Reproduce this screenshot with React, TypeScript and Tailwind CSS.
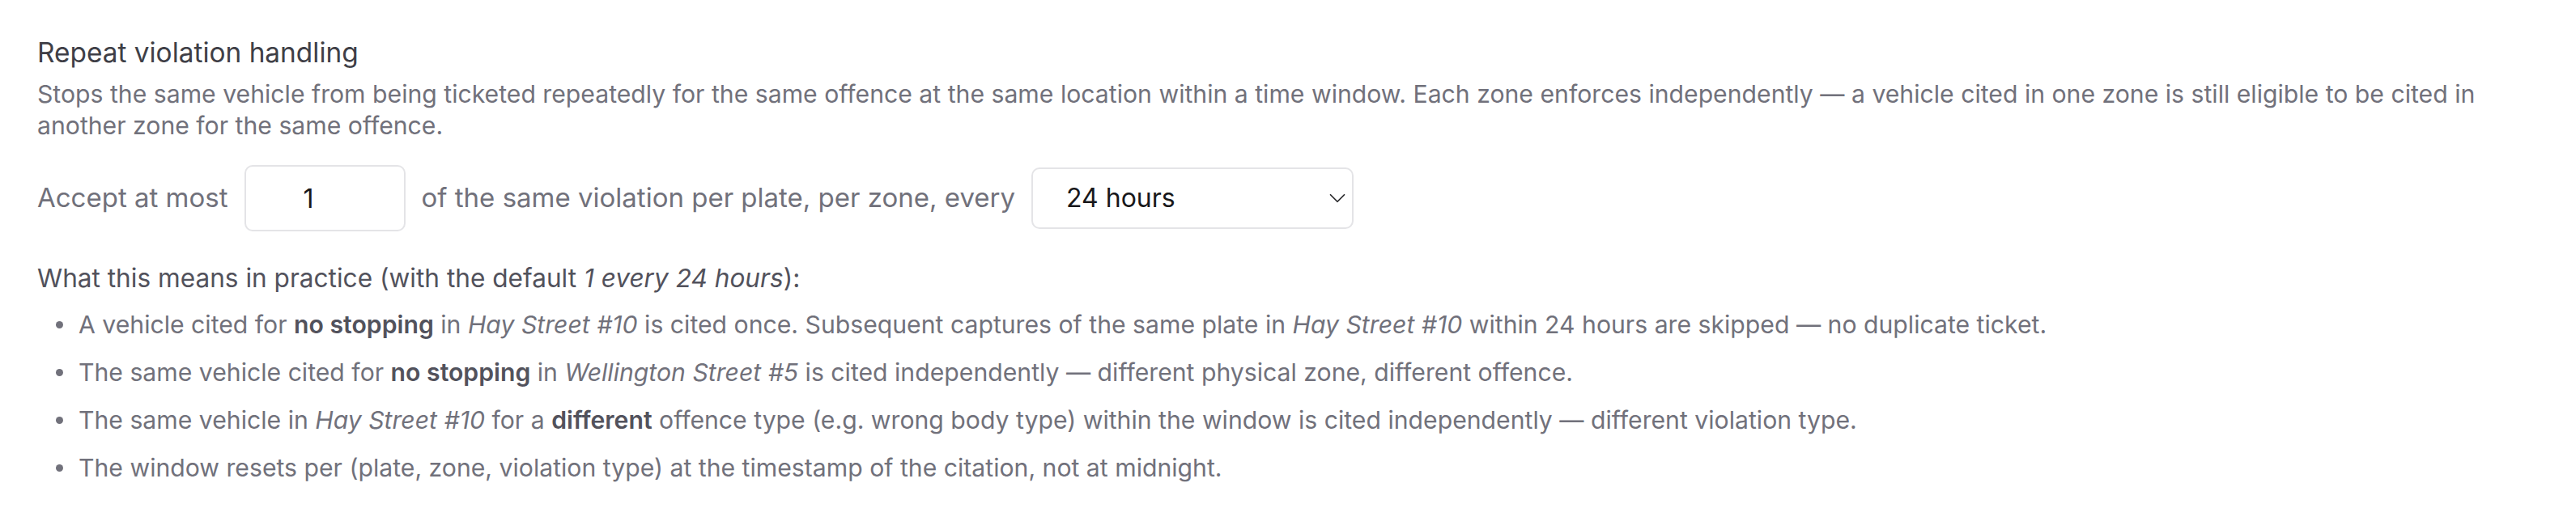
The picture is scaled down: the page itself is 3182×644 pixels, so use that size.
import React, { useState } from "react";

const examples: React.ReactNode[] = [
    <>
        A vehicle cited for <b className="font-semibold text-zinc-600">no stopping</b> in <i>Hay Street #10</i> is cited once.
        Subsequent captures of the same plate in <i>Hay Street #10</i> within 24 hours are skipped — no duplicate ticket.
    </>,
    <>
        The same vehicle cited for <b className="font-semibold text-zinc-600">no stopping</b> in <i>Wellington Street #5</i> is
        cited independently — different physical zone, different offence.
    </>,
    <>
        The same vehicle in <i>Hay Street #10</i> for a <b className="font-semibold text-zinc-600">different</b> offence type
        (e.g. wrong body type) within the window is cited independently — different violation type.
    </>,
    <>The window resets per (plate, zone, violation type) at the timestamp of the citation, not at midnight.</>,
];

const App = () => {
    const [limit, setLimit] = useState("1");
    const [window, setWindow] = useState("24");

    return (
        <div
            className="min-h-screen bg-white px-[46px] pt-[43px] pb-[40px] text-zinc-500"
            style={{ fontFamily: "Inter, 'Noto Sans', sans-serif" }}
        >
            <h2 className="text-[33.4px] leading-[44px] text-zinc-700">Repeat violation handling</h2>
            <p className="mt-[10px] text-[30.2px] leading-[39px]">
                Stops the same vehicle from being ticketed repeatedly for the same offence at the same location within a time
                window. Each zone enforces independently — a vehicle cited in one zone is still eligible to be cited in another
                zone for the same offence.
            </p>

            {/* limit + window controls */}
            <div className="mt-[29px] flex items-center gap-[20px] text-[33px]">
                <span>Accept at most</span>
                <input
                    type="text"
                    value={limit}
                    onChange={(e) => setLimit(e.target.value)}
                    className="h-[82px] w-[199px] rounded-[10px] border-2 border-zinc-200 bg-white pl-[12px] pr-[52px] text-center text-[32px] text-zinc-900 outline-none"
                />
                <span>of the same violation per plate, per zone, every</span>
                <div className="relative">
                    <select
                        value={window}
                        onChange={(e) => setWindow(e.target.value)}
                        className="h-[76px] w-[398px] appearance-none rounded-[10px] border-2 border-zinc-200 bg-white pl-[41px] text-[32px] text-zinc-900 outline-none"
                    >
                        <option value="1">1 hour</option>
                        <option value="12">12 hours</option>
                        <option value="24">24 hours</option>
                        <option value="48">48 hours</option>
                        <option value="168">7 days</option>
                    </select>
                    <svg
                        viewBox="0 0 24 24"
                        className="pointer-events-none absolute right-[3px] top-1/2 h-[34px] w-[34px] -translate-y-1/2 text-zinc-800"
                        fill="none"
                        stroke="currentColor"
                        strokeWidth="1.2"
                        strokeLinecap="round"
                        strokeLinejoin="round"
                    >
                        <path d="M6 9l6 6 6-6" />
                    </svg>
                </div>
            </div>

            <p className="mt-[38px] text-[31.6px] leading-[40px] text-zinc-600">
                What this means in practice (with the default <i>1 every 24 hours</i>):
            </p>
            <ul className="mt-[17px] flex flex-col gap-[19px] text-[30.2px] leading-[40px]">
                {examples.map((item, i) => (
                    <li key={i} className="flex items-center">
                        <span className="ml-[23px] mr-[19px] h-[9px] w-[9px] shrink-0 rounded-full bg-zinc-500" />
                        <span>{item}</span>
                    </li>
                ))}
            </ul>
        </div>
    );
};

export default App;
